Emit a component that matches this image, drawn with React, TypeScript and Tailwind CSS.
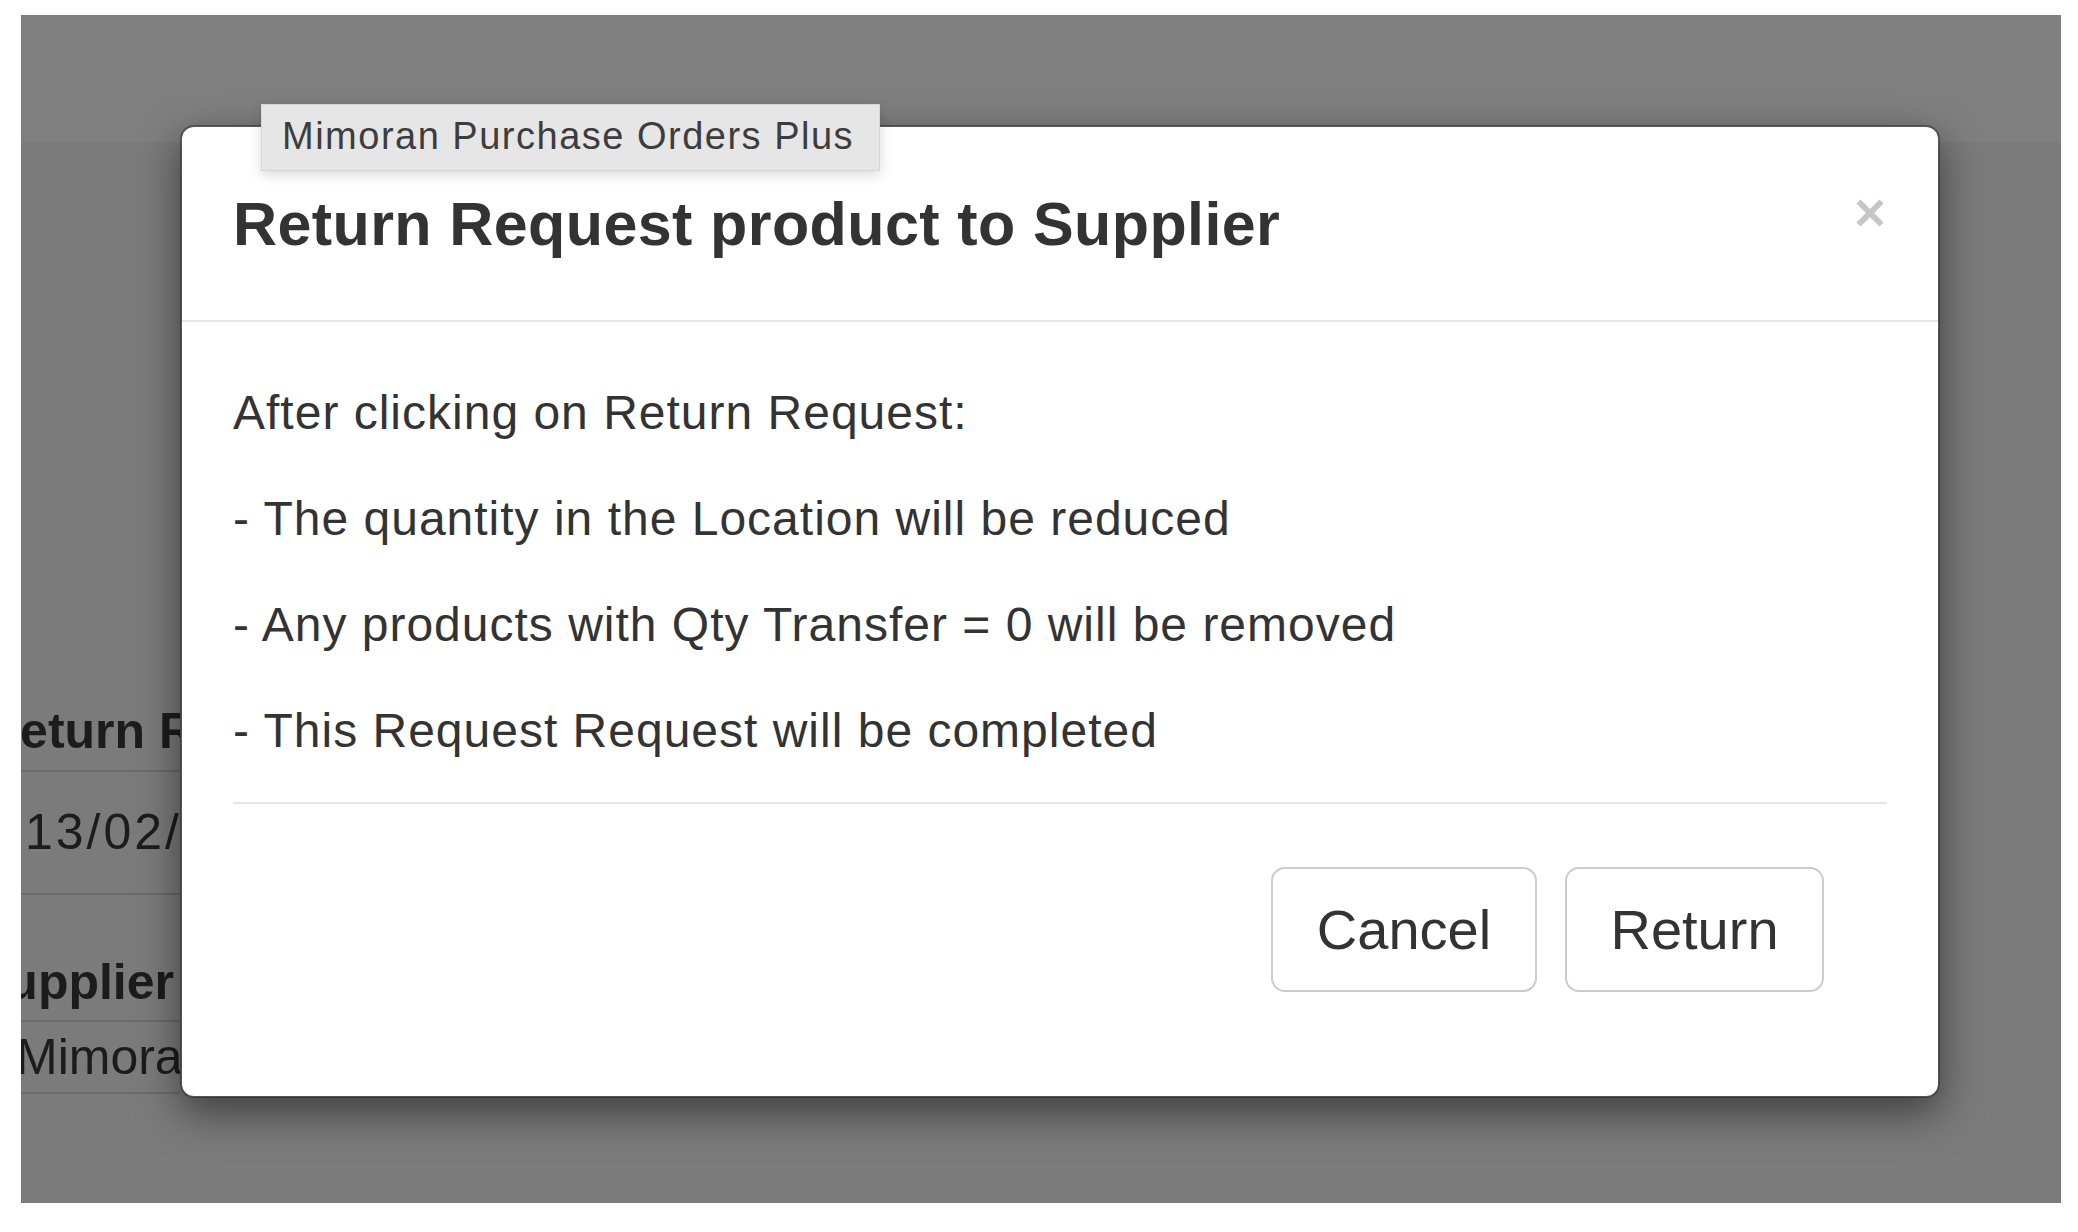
import React from 'react'

const font = { fontFamily: '"Liberation Sans", Arial, Helvetica, sans-serif' }

function CloseIcon() {
  return (
    <svg width="28" height="28" viewBox="0 0 28 28" className="shrink-0 mt-[8px]">
      <path d="M2.5 2.5 L25.5 25.5 M25.5 2.5 L2.5 25.5" stroke="#c6c6c6" strokeWidth="6" strokeLinecap="butt" />
    </svg>
  )
}

export default function App() {
  const lines = [
    'After clicking on Return Request:',
    '- The quantity in the Location will be reduced',
    '- Any products with Qty Transfer = 0 will be removed',
    '- This Request Request will be completed',
  ]

  return (
    <div className="w-[2078px] h-[1232px] bg-white overflow-hidden" style={font}>
      <div className="relative ml-[21px] mt-[15px] w-[2040px] h-[1188px] bg-[#7b7b7b] overflow-hidden">
        {/* page behind the backdrop, only the strip left of the modal shows */}
        <div className="h-[127px] bg-[#808080]" />
        <div className="h-[551px]" />
        <div className="w-[159px] overflow-hidden text-[50px] text-[#1c1c1c]">
          <div className="h-[77px] leading-[77px] font-bold border-b-2 border-[#6b6b6b] box-content whitespace-nowrap">
            <span className="ml-[-37px]">Return R</span>
          </div>
          <div className="h-[121px] leading-[121px] border-b-2 border-[#6b6b6b] box-content whitespace-nowrap">
            <span className="ml-[4px] tracking-[3px]">13/02/</span>
          </div>
          <div className="h-[50px]" />
          <div className="h-[75px] leading-[75px] font-bold border-b-2 border-[#6b6b6b] box-content whitespace-nowrap">
            <span className="ml-[-47px]">Supplier</span>
          </div>
          <div className="h-[70px] leading-[70px] border-b-2 border-[#6b6b6b] box-content whitespace-nowrap">
            <span className="ml-[-5px]">Mimora</span>
          </div>
        </div>

        {/* modal */}
        <div className="absolute left-[159px] top-[110px] w-[1760px] bg-white bg-clip-padding border-2 border-black/30 rounded-[14px] shadow-[0_14px_42px_rgba(0,0,0,0.5)] text-[#333]">
          <div className="flex items-start justify-between pl-[51px] pr-[54px] pt-[64px] pb-[63px] border-b-2 border-[#e5e5e5]">
            <h4 className="text-[61px] font-bold leading-[66px] tracking-[0.4px] whitespace-nowrap">
              Return Request product to Supplier
            </h4>
            <CloseIcon />
          </div>
          <div className="px-[51px] pt-[38px] pb-[104px]">
            {lines.map((l) => (
              <p key={l} className="text-[48px] leading-[106px] tracking-[1px] whitespace-nowrap">
                {l}
              </p>
            ))}
            <div className="mt-[18px] h-[2px] bg-[#e5e5e5]" />
            <div className="flex justify-end gap-[28px] mt-[63px] mr-[63px]">
              <button className="w-[266px] h-[125px] rounded-[14px] border-2 border-[#cccccc] bg-white text-[56px] text-[#333]">
                Cancel
              </button>
              <button className="w-[259px] h-[125px] rounded-[14px] border-2 border-[#cccccc] bg-white text-[56px] text-[#333]">
                Return
              </button>
            </div>
          </div>
        </div>

        {/* app name tooltip */}
        <div className="absolute left-[240px] top-[89px] w-[619px] h-[67px] flex items-center pl-[20px] pb-[3px] bg-[#e6e6e6] border border-[#d6d6d6] shadow-[0_4px_12px_rgba(0,0,0,0.15)] text-[38px] tracking-[1.5px] text-[#3d3d3d] whitespace-nowrap">
          Mimoran Purchase Orders Plus
        </div>
      </div>
    </div>
  )
}
